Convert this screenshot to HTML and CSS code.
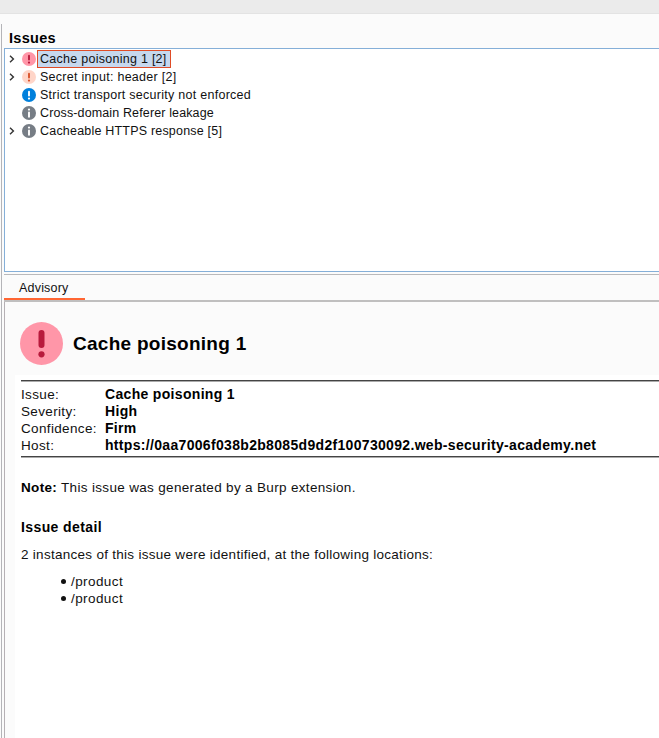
FILE: index.html
```html
<!DOCTYPE html>
<html lang="en">
<head>
<meta charset="utf-8">
<title>Issues</title>
<link rel="stylesheet" href="styles.css">
</head>
<body>
<svg width="0" height="0" class="defs">
  <symbol id="chev" viewBox="0 0 6 8"><path d="M1 .8 4.4 4 1 7.2" fill="none" stroke="#333" stroke-width="1.4"/></symbol>
  <symbol id="bang" viewBox="0 0 14 14"><circle cx="7" cy="7" r="7"/><path d="M7 3.6v4" stroke="currentColor" stroke-width="1.9" stroke-linecap="round"/><circle cx="7" cy="10.6" r="1.1" fill="currentColor"/></symbol>
  <symbol id="info" viewBox="0 0 14 14"><circle cx="7" cy="7" r="7"/><circle cx="7" cy="3.6" r="1.1" fill="currentColor"/><path d="M7 6.5v4.2" stroke="currentColor" stroke-width="1.9" stroke-linecap="round"/></symbol>
</svg>
<div class="topbar"></div>
<main class="shell">
  <h1 class="heading">Issues</h1>
  <ul class="tree">
    <li><svg class="chev"><use href="#chev"/></svg><svg class="ico high"><use href="#bang"/></svg><span class="label selected">Cache poisoning 1 [2]</span></li>
    <li><svg class="chev"><use href="#chev"/></svg><svg class="ico medium"><use href="#bang"/></svg><span class="label">Secret input: header [2]</span></li>
    <li><span class="chev"></span><svg class="ico low"><use href="#bang"/></svg><span class="label">Strict transport security not enforced</span></li>
    <li><span class="chev"></span><svg class="ico note"><use href="#info"/></svg><span class="label tight">Cross-domain Referer leakage</span></li>
    <li><svg class="chev"><use href="#chev"/></svg><svg class="ico note"><use href="#info"/></svg><span class="label snug">Cacheable HTTPS response [5]</span></li>
  </ul>
  <nav class="tabs"><span class="tab">Advisory</span></nav>
  <section class="panel">
    <header class="title">
      <svg class="big" viewBox="0 0 43 43"><circle cx="21.5" cy="21.5" r="21.5" fill="#ff96a8"/><path d="M21.5 11v12" stroke="#b81a3c" stroke-width="6" stroke-linecap="round"/><circle cx="21.5" cy="32.3" r="3.1" fill="#b81a3c"/></svg>
      <h2>Cache poisoning 1</h2>
    </header>
    <article class="doc">
      <dl class="facts">
        <dt>Issue:</dt><dd>Cache poisoning 1</dd>
        <dt>Severity:</dt><dd>High</dd>
        <dt>Confidence:</dt><dd>Firm</dd>
        <dt>Host:</dt><dd>https://0aa7006f038b2b8085d9d2f100730092.web-security-academy.net</dd>
      </dl>
      <p class="remark"><b>Note:</b> This issue was generated by a Burp extension.</p>
      <h3>Issue detail</h3>
      <p class="detail">2 instances of this issue were identified, at the following locations:</p>
      <ul class="places"><li>/product</li><li>/product</li></ul>
    </article>
  </section>
</main>
</body>
</html>
```
FILE: styles.css
```css
* { box-sizing: border-box; margin: 0; padding: 0; }
body { height: 738px; overflow: hidden; background: #fbfbfb; color: #111; font: 12px/18px "Liberation Sans", Arial, sans-serif; white-space: nowrap; }
ul { list-style: none; }
svg { display: block; flex: none; }
.defs { display: none; }
.topbar { height: 14px; background: #ebebeb; border-bottom: 1px solid #e3e3e3; }
.shell { display: flex; flex-direction: column; height: 714px; margin: 10px 0 0 1px; padding-left: 2px; border-left: 1px solid #b4b4b8; }
.heading { flex: none; height: 24px; padding: 4px 0 0 5px; font: bold 14.5px/20px "Liberation Sans", Arial, sans-serif; letter-spacing: .3px; color: #000; }
.tree { flex: none; height: 224px; padding: 1px 0 0 4px; background: #fff; border: 1px solid #85afd8; border-right: 0; }
.tree li { display: flex; align-items: center; height: 18px; }
.chev { width: 6px; height: 8px; margin-right: 7px; }
.ico { width: 14px; height: 14px; margin-right: 1px; }
.high { fill: #ff96a8; color: #b81a3c; }
.medium { fill: #ffd5c8; color: #d9532b; }
.low { fill: #0080dc; color: #fff; }
.note { fill: #767d85; color: #fff; }
.label { height: 18px; padding: 0 3px 0 2px; border: 1px solid transparent; line-height: 16px; font-size: 12.5px; letter-spacing: .27px; }
.tight { letter-spacing: .13px; }
.snug { letter-spacing: .2px; }
.selected { background: #c6d8ee; border-color: #df4c27; }
.tabs { flex: none; height: 28px; margin-top: 2px; border-top: 1px solid #b9b9bb; border-bottom: 2px solid #c0bfbf; display: flex; }
.tab { height: 25px; width: 81px; padding: 4px 0 0 15px; border-bottom: 2px solid #ff6633; font-size: 12.5px; letter-spacing: .2px; }
.panel { flex: 1; padding: 20px 0 0 10px; border-left: 1px solid #b5b0b4; }
.title { display: flex; align-items: center; gap: 10px; height: 43px; padding-left: 5px; }
.big { width: 43px; height: 43px; }
h2 { font-size: 19px; line-height: 24px; letter-spacing: .27px; color: #000; }
.doc { height: 370px; margin-top: 10px; padding: 5px 0 0 6px; background: #fff; font-size: 13.5px; line-height: 17px; letter-spacing: .28px; }
.facts { display: grid; grid-template-columns: 84px 1fr; height: 78px; padding-top: 5px; border-top: 1px solid #444; border-bottom: 1px solid #aaa; box-shadow: inset 0 1px #aaa, inset 0 -1px #444; grid-auto-rows: 17px; }
dt { letter-spacing: .35px; }
dd, h3, b { font-weight: bold; color: #000; }
dd { font-size: 14px; letter-spacing: .32px; }
.remark { margin-top: 21px; letter-spacing: .33px; }
h3 { font-size: 14px; line-height: 18px; letter-spacing: .4px; margin-top: 22px; }
.detail { margin-top: 10px; }
.places { margin-top: 10px; padding-left: 40px; letter-spacing: .42px; }
.places li { display: flex; align-items: center; }
.places li::before { content: ""; width: 5px; height: 5px; margin-right: 5px; border-radius: 50%; background: #111; }
```
